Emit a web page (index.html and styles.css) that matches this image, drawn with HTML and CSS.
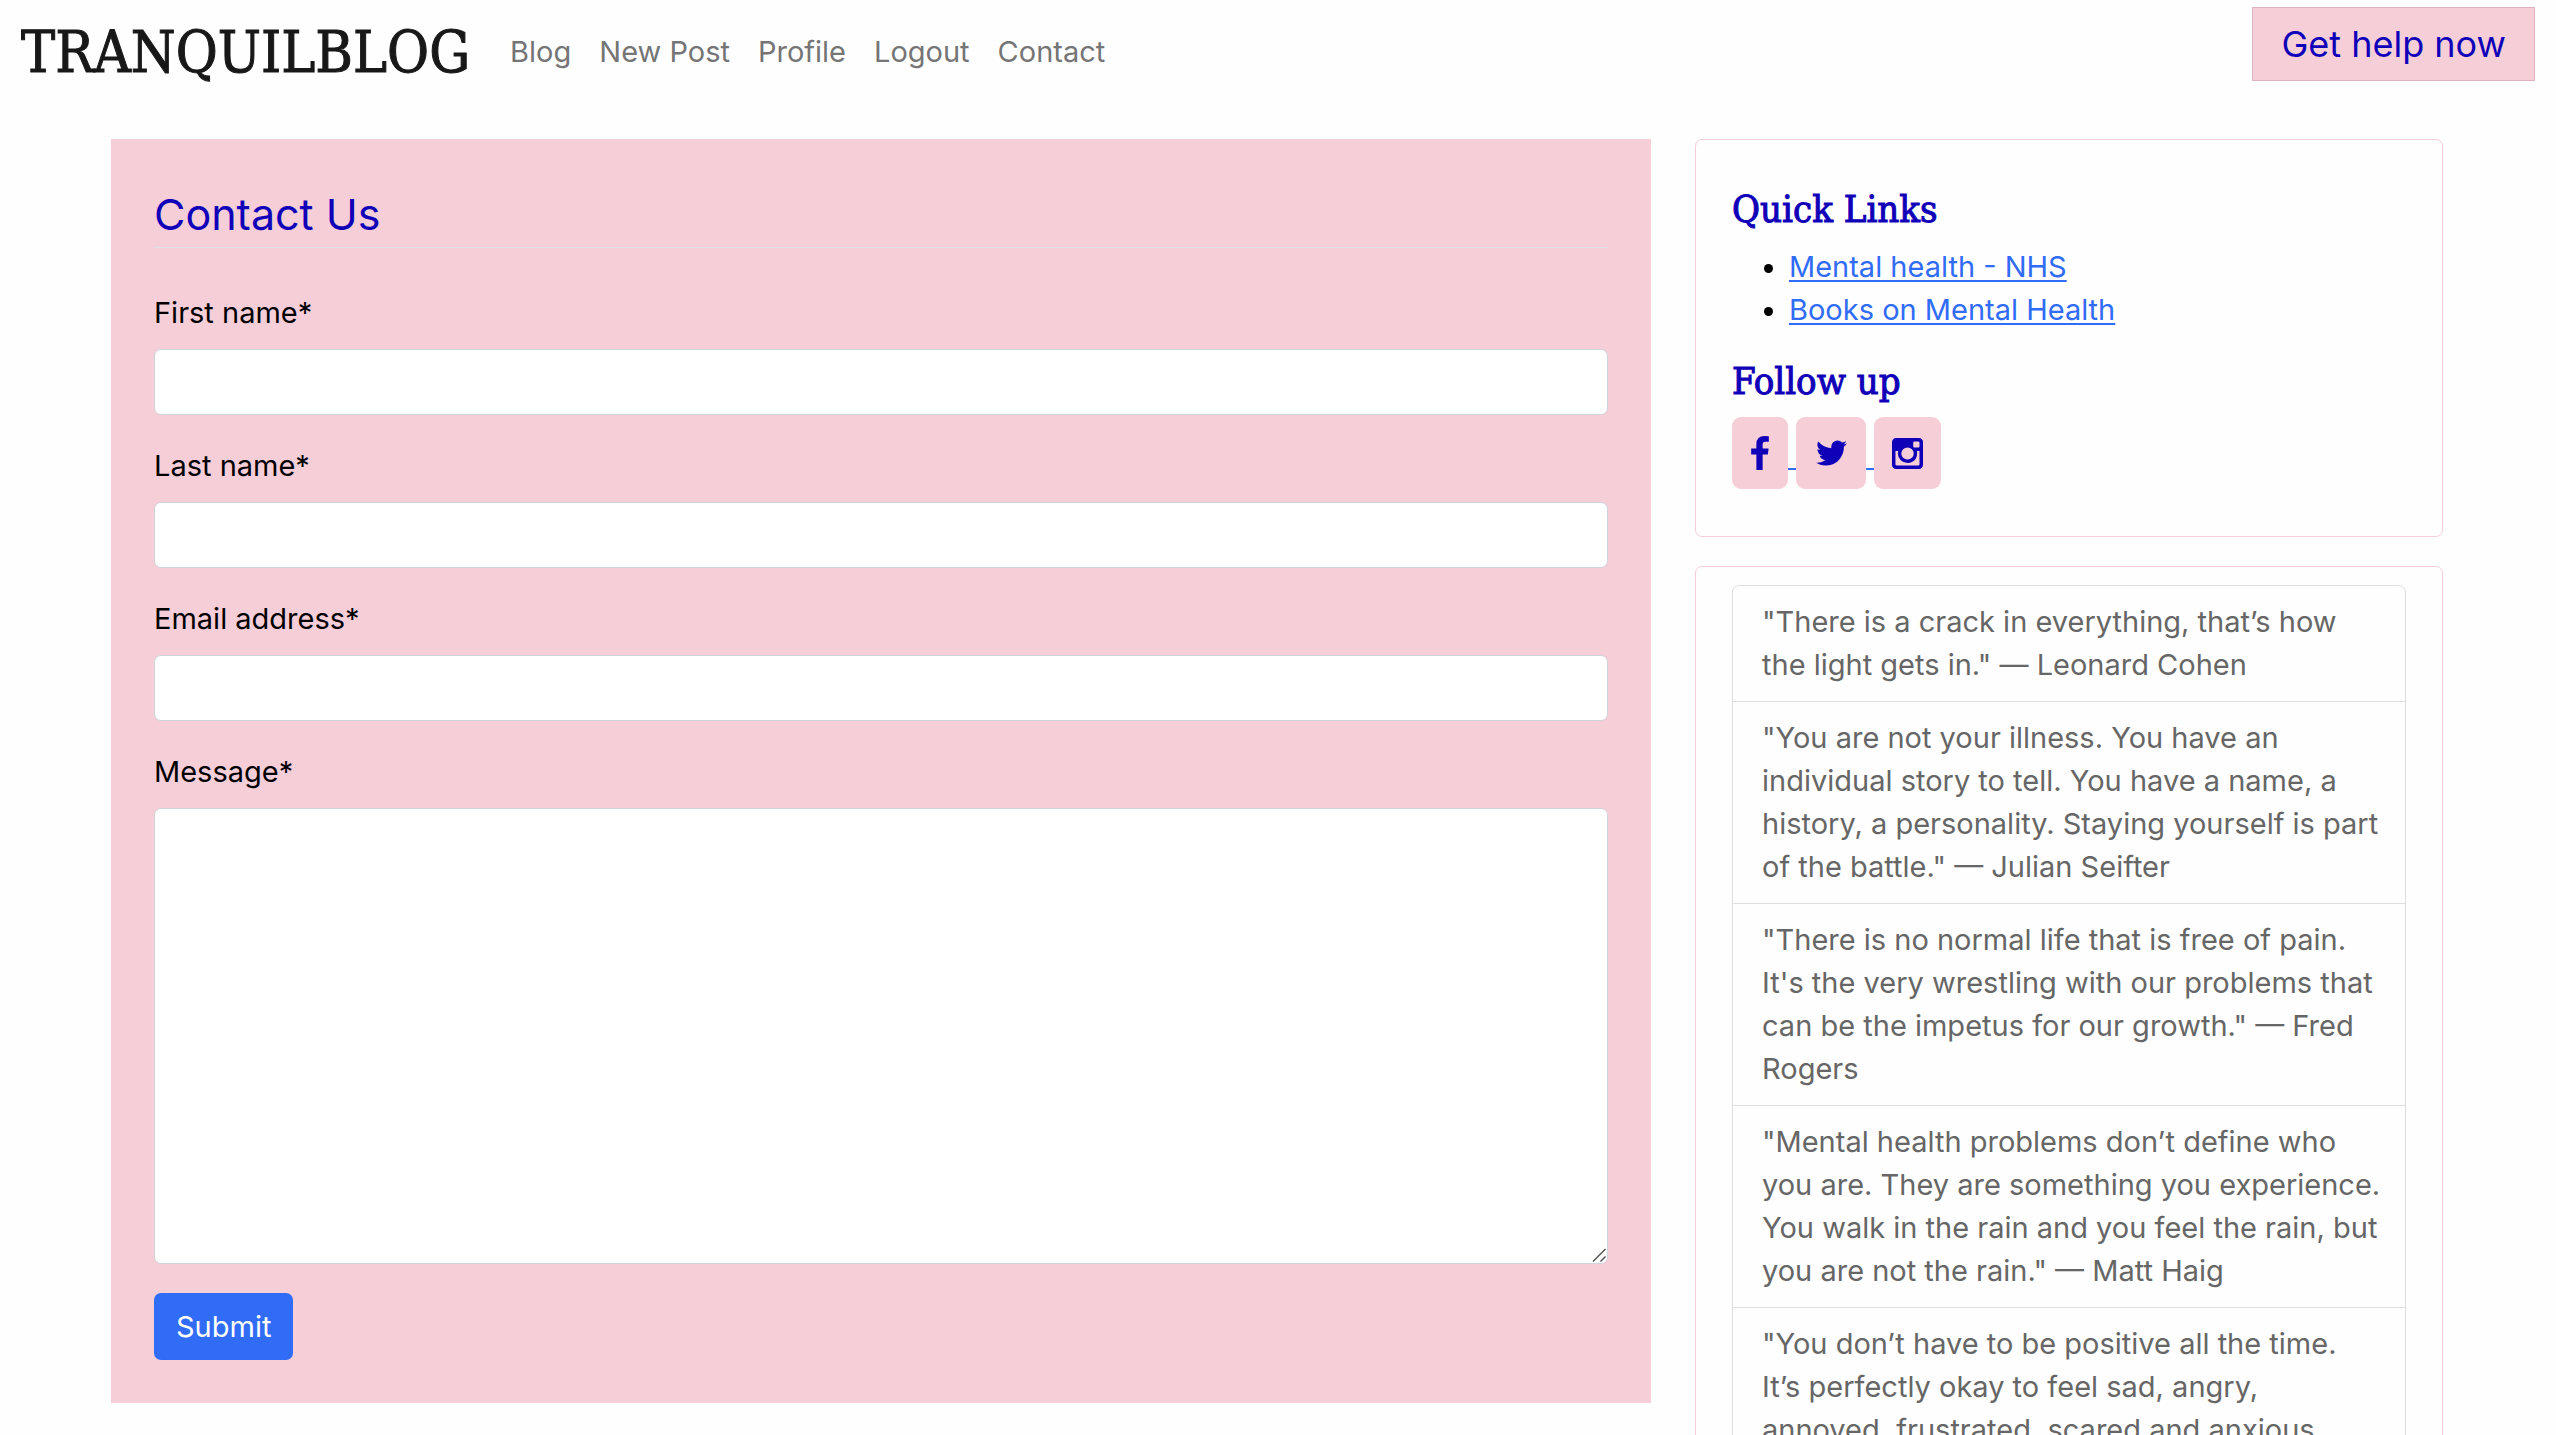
FILE: index.html
```html
<!DOCTYPE html>
<html lang="en">
<head>
  <meta charset="utf-8">
  <meta name="viewport" content="width=device-width, initial-scale=1">
  <title>TranquilBlog - Contact</title>
  <link rel="stylesheet" href="styles.css">
</head>
<body>
  <header class="navbar">
    <a class="brand" href="#">TRANQUILBLOG</a>
    <nav class="nav">
      <a href="#">Blog</a>
      <a href="#">New Post</a>
      <a href="#">Profile</a>
      <a href="#">Logout</a>
      <a href="#">Contact</a>
    </nav>
    <button class="help" type="button">Get help now</button>
  </header>

  <main class="page">
    <form class="contact">
      <h1 class="contact-title">Contact Us</h1>
      <div class="field">
        <label for="first">First name*</label>
        <input id="first" class="control" type="text" required>
      </div>
      <div class="field">
        <label for="last">Last name*</label>
        <input id="last" class="control" type="text" required>
      </div>
      <div class="field">
        <label for="email">Email address*</label>
        <input id="email" class="control" type="email" required>
      </div>
      <div class="field">
        <label for="message">Message*</label>
        <textarea id="message" class="control message" required></textarea>
      </div>
      <button class="submit" type="submit">Submit</button>
    </form>

    <aside class="sidebar">
      <section class="card links-card">
        <h2 class="card-title">Quick Links</h2>
        <ul class="links">
          <li><a href="#">Mental health - NHS</a></li>
          <li><a href="#">Books on Mental Health</a></li>
        </ul>
        <h2 class="card-title">Follow up</h2>
        <div class="social">
          <a href="#" aria-label="Facebook"><span class="tile facebook"><svg width="18" height="34" viewBox="479 0 864 1664"><path d="M1343 12v264h-157q-86 0-116 36t-30 108v189h293l-39 296h-254v759h-306v-759h-255v-296h255v-218q0-186 104-288.5t277-102.5q147 0 228 12z"/></svg></span> </a><a href="#" aria-label="Twitter"><span class="tile twitter"><svg width="31" height="26" viewBox="108 256 1576 1280"><path d="M1684 408q-67 98-162 167 1 14 1 42 0 130-38 259.5t-115.5 248.5-184.5 210.5-258 146-323 54.5q-271 0-491-145 35 4 78 4 225 0 401-138-105-2-188-64.5t-114-159.5q33 5 61 5 43 0 85-11-112-23-185.5-111.5t-73.5-205.5v-4q68 38 146 41-66-44-105-115t-39-154q0-88 44-163 121 149 294.5 238.5t371.5 99.5q-8-38-8-74 0-134 94.5-228.5t228.5-94.5q140 0 236 102 109-21 205-78-37 115-142 178 93-10 186-50z"/></svg></span> </a><a href="#" aria-label="Instagram"><span class="tile instagram"><svg width="31" height="31" viewBox="0 128 1536 1536"><path d="M1362 1426v-648h-135q20 63 20 131 0 126-64 232.5t-174 168.5-240 62q-197 0-337-135.5t-140-327.5q0-68 20-131h-141v648q0 26 17.5 43.5t43.5 17.5h1069q25 0 43-17.5t18-43.5zm-284-533q0-124-90.5-211.5t-218.5-87.5q-127 0-217.5 87.5t-90.5 211.5 90.5 211.5 217.5 87.5q128 0 218.5-87.5t90.5-211.5zm284-360v-165q0-28-20-48.5t-49-20.5h-174q-29 0-49 20.5t-20 48.5v165q0 29 20 49t49 20h174q29 0 49-20t20-49zm174-208v1142q0 81-58 139t-139 58h-1142q-81 0-139-58t-58-139v-1142q0-81 58-139t139-58h1142q81 0 139 58t58 139z"/></svg></span></a>
        </div>
      </section>

      <section class="card quotes-card">
        <ul class="quotes">
          <li>"There is a crack in everything, that’s how the light gets in." ― Leonard Cohen</li>
          <li>"You are not your illness. You have an individual story to tell. You have a name, a history, a personality. Staying yourself is part of the battle." — Julian Seifter</li>
          <li>"There is no normal life that is free of pain. It's the very wrestling with our problems that can be the impetus for our growth." — Fred Rogers</li>
          <li>"Mental health problems don’t define who you are. They are something you experience. You walk in the rain and you feel the rain, but you are not the rain." — Matt Haig</li>
          <li>"You don’t have to be positive all the time. It’s&nbsp;perfectly okay to feel sad, angry, annoyed, frustrated, scared and anxious.</li>
        </ul>
      </section>
    </aside>
  </main>
</body>
</html>
```
FILE: styles.css
```css
:root {
  --pink: #f6ced8;
  --navy: #1000b8;
  --blue: #306cf6;
  --sans: Inter, "Liberation Sans", sans-serif;
  --slab: "Roboto Slab", "DejaVu Serif Condensed", "DejaVu Serif", serif;
}

* {
  box-sizing: border-box;
}

body {
  margin: 0;
  height: 100vh;
  overflow: hidden;
  background: #fefefe;
  color: #000;
  font-family: var(--sans);
  font-size: 29px;
  line-height: 43px;
}

h1,
h2,
ul {
  margin: 0;
  padding: 0;
}

button,
input,
textarea {
  font: inherit;
}

.navbar {
  display: flex;
  align-items: flex-start;
  padding: 7px 21px 0;
  height: 139px;
}

.brand {
  color: #181818;
  font-family: var(--slab);
  font-size: 57px;
  line-height: 90px;
  text-decoration: none;
  -webkit-text-stroke: 1px;
}

.nav {
  display: flex;
  gap: 28px;
  margin-left: 40px;
  padding-top: 23px;
}

.nav a {
  color: #757575;
  text-decoration: none;
}

.help {
  margin-left: auto;
  padding: 0 28px;
  height: 74px;
  border: 1px solid #dcb2be;
  background: var(--pink);
  color: var(--navy);
  font-size: 36px;
}

.page {
  display: grid;
  grid-template-columns: 1540fr 748fr;
  gap: 44px;
  align-items: start;
  padding: 0 113px 0 111px;
}

.contact {
  padding: 43px;
  background: var(--pink);
}

.contact-title {
  margin-bottom: 43px;
  padding: 10px 0;
  border-bottom: 1px solid #dee2e6;
  color: var(--navy);
  font-size: 43px;
  font-weight: 400;
  line-height: 45px;
}

.field {
  display: flex;
  flex-direction: column;
  gap: 15px;
  margin-bottom: 29px;
}

.control {
  width: 100%;
  height: 66px;
  padding: 10px 21px;
  border: 1px solid #ced4da;
  border-radius: 7px;
  background: #fff;
}

.message {
  height: 456px;
  resize: vertical;
}

.message::-webkit-resizer {
  background: url("data:image/svg+xml,%3Csvg xmlns='http://www.w3.org/2000/svg' width='15' height='15'%3E%3Cpath d='M1 13.5L13.5 1M8.5 13.5L13.5 8.5' stroke='%23555' stroke-width='1.5'/%3E%3C/svg%3E") no-repeat;
}

.submit {
  display: block;
  height: 67px;
  padding: 0 22px;
  border: 0;
  border-radius: 7px;
  background: var(--blue);
  color: #fff;
}

.sidebar {
  display: grid;
  gap: 29px;
}

.card {
  padding: 18px 36px;
  border: 1px solid var(--pink);
  border-radius: 7px;
}

.links-card {
  padding: 47px 36px;
}

.card-title {
  margin-bottom: 14px;
  color: var(--navy);
  font-family: var(--slab);
  font-size: 38px;
  font-weight: 400;
  line-height: 44px;
  -webkit-text-stroke: 1px;
}

.links {
  margin-bottom: 28px;
  padding-left: 57px;
}

.links a,
.social a {
  color: var(--blue);
  text-decoration-thickness: 2px;
  text-underline-offset: 3px;
}

.social a {
  text-underline-offset: 7px;
}

.tile {
  display: inline-flex;
  align-items: center;
  justify-content: center;
  width: 70px;
  height: 72px;
  border-radius: 9px;
  background: var(--pink);
  vertical-align: middle;
}

.facebook {
  width: 56px;
}

.instagram {
  width: 67px;
}

.tile svg {
  fill: var(--navy);
}

.quotes {
  border: 1px solid #dcdee0;
  border-radius: 7px;
  color: #666;
  list-style: none;
}

.quotes li {
  padding: 14px 18px 15px 29px;
}

.quotes li + li {
  border-top: 1px solid #dcdee0;
}
```
